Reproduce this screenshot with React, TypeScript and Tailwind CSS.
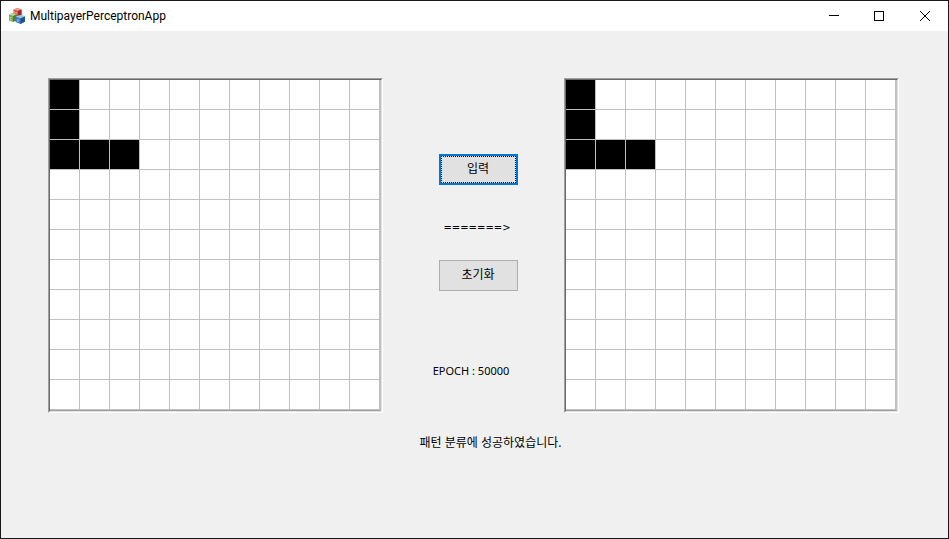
import React from "react";

const SIZE = 11;
const FILLED = new Set([0, SIZE, SIZE * 2, SIZE * 2 + 1, SIZE * 2 + 2]);

function PatternGrid({ label }: { label: string }) {
  return (
    <div className="shrink-0 border border-t-[#a0a0a0] border-l-[#a0a0a0] border-r-white border-b-white">
      <div className="border border-t-[#696969] border-l-[#696969] border-r-[#e3e3e3] border-b-[#e3e3e3]">
        <div
          role="img"
          aria-label={label}
          className="grid grid-cols-[repeat(11,30px)] auto-rows-[30px] border-r border-b border-r-[#c0c0c0] border-b-[#a0a0a0] bg-white"
        >
          {Array.from({ length: SIZE * SIZE }, (_, i) => (
            <div
              key={i}
              className={
                FILLED.has(i)
                  ? "border-r border-b border-[#c0c0c0] bg-black"
                  : "border-r border-b border-[#c0c0c0] bg-white"
              }
            />
          ))}
        </div>
      </div>
    </div>
  );
}

function AppIcon() {
  return (
    <svg width="16" height="16" viewBox="0 0 16 16" aria-hidden="true">
      <path d="M4.500 1.500 8.500 0 12.500 1.500V7L9 9 4.500 7.500Z" fill="#d2483c" />
      <path d="M4.500 1.500 8.500 0 12.500 1.500 9 3Z" fill="#eda092" />
      <path d="M9 3 12.500 1.500V7L9 9Z" fill="#a5281f" />
      <path d="M0 6.500 3.500 5 7.500 6.500V12L4 14 0 12.500Z" fill="#79a94f" />
      <path d="M0 6.500 3.500 5 7.500 6.500 4 8Z" fill="#bcd8a0" />
      <path d="M4 8 7.500 6.500V12L4 14Z" fill="#4d7f2c" />
      <path d="M6.500 8.500 11.500 7 16 8.500V13.500L11.500 16 6.500 14Z" fill="#3f79bd" />
      <path d="M6.500 8.500 11.500 7 16 8.500 11.500 10.500Z" fill="#9cc3ea" />
      <path d="M11.500 10.500 16 8.500V13.500L11.500 16Z" fill="#205391" />
      <path d="M5.700 6V3.500L6.700 4.800 7.800 4V6.500M2.800 9.500 1.300 9.300V11.500L2.800 12M8.300 11V13.500L10 13V11.500" fill="none" stroke="#ffffff" strokeOpacity=".6" strokeWidth=".7" />
    </svg>
  );
}

function TitleBar() {
  return (
    <header className="flex h-[30px] items-center bg-white pl-2">
      <AppIcon />
      <h1 className="ml-[5px] flex-1 font-[Roboto,sans-serif] text-[12px] leading-4">
        MultipayerPerceptronApp
      </h1>
      <button type="button" aria-label="Minimize" className="flex h-full w-[44px] items-center justify-center">
        <svg width="10" height="10" shapeRendering="crispEdges">
          <path d="M0 4.500H10" stroke="black" />
        </svg>
      </button>
      <button type="button" aria-label="Maximize" className="flex h-full w-[46px] items-center justify-center">
        <svg width="10" height="10" shapeRendering="crispEdges">
          <rect x=".5" y=".5" width="9" height="9" fill="none" stroke="black" />
        </svg>
      </button>
      <button type="button" aria-label="Close" className="flex h-full w-[46px] items-center justify-center">
        <svg width="10" height="10">
          <path d="M0 0 10 10M10 0 0 10" stroke="black" />
        </svg>
      </button>
    </header>
  );
}

export default function App() {
  return (
    <div className="flex min-h-screen flex-col border border-[#18181a] bg-[#f0f0f0] font-['Noto_Sans','Noto_Sans_CJK_KR',sans-serif] text-[12px] leading-4 text-black">
      <TitleBar />
      <main className="px-[47px] pt-[47px]">
        <div className="flex items-start pr-[2px]">
          <PatternGrid label="Input pattern" />
          <div className="flex flex-1 flex-col items-center pt-[76px] pl-[9px]">
            <button type="button" className="h-[31px] w-[79px] border-2 border-[#0078d7] bg-[#e1e1e1]">
              <span className="flex h-full items-center justify-center border border-dotted border-black pb-px">입력</span>
            </button>
            <p className="mt-[35px] mr-[2px] font-['DejaVu_Sans',sans-serif] text-[10px] leading-4">=======&gt;</p>
            <button type="button" className="mt-[24px] h-[31px] w-[79px] border border-[#adadad] bg-[#e1e1e1] pb-px">
              초기화
            </button>
            <p className="mt-[72px] mr-[14px] text-[11px] leading-4">EPOCH : 50000</p>
          </div>
          <PatternGrid label="Output pattern" />
        </div>
        <p className="mt-[22px] pl-[32px] text-center">패턴 분류에 성공하였습니다.</p>
      </main>
    </div>
  );
}
